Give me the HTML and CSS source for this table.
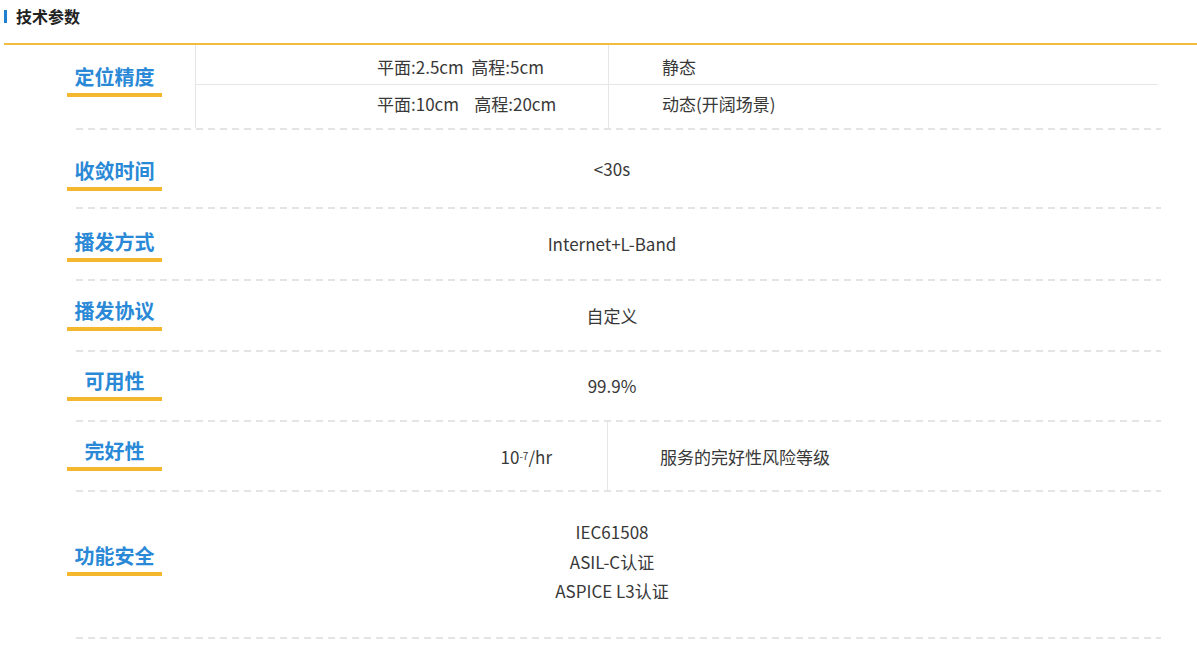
FILE: index.html
```html
<!DOCTYPE html>
<html lang="zh">
<head>
<meta charset="utf-8">
<title>技术参数</title>
<link rel="stylesheet" href="styles.css">
</head>
<body>
<div class="header">
  <h2 class="title">技术参数</h2>
</div>
<div class="spec">
  <div class="row r1">
    <div class="label"><span class="label-text">定位精度</span></div>
    <div class="value split-rows">
      <div class="sub sub-a">平面:2.5cm&nbsp;&nbsp;高程:5cm</div>
      <div class="sub sub-b">静态</div>
      <div class="sub sub-a last">平面:10cm&nbsp;&nbsp;&nbsp;&nbsp;高程:20cm</div>
      <div class="sub sub-b last">动态(开阔场景)</div>
    </div>
  </div>
  <div class="row r2">
    <div class="label"><span class="label-text">收敛时间</span></div>
    <div class="value single">&lt;30s</div>
  </div>
  <div class="row r3">
    <div class="label"><span class="label-text">播发方式</span></div>
    <div class="value single">Internet+L-Band</div>
  </div>
  <div class="row r4">
    <div class="label"><span class="label-text">播发协议</span></div>
    <div class="value single">自定义</div>
  </div>
  <div class="row r5">
    <div class="label"><span class="label-text">可用性</span></div>
    <div class="value single">99.9%</div>
  </div>
  <div class="row r6">
    <div class="label"><span class="label-text">完好性</span></div>
    <div class="value split-cols">
      <div class="col-a">10<sup>-7</sup>/hr</div>
      <div class="col-b">服务的完好性风险等级</div>
    </div>
  </div>
  <div class="row r7">
    <div class="label"><span class="label-text">功能安全</span></div>
    <div class="value single multi">
      <div>IEC61508</div>
      <div>ASIL-C认证</div>
      <div>ASPICE L3认证</div>
    </div>
  </div>
</div>
</body>
</html>
```

FILE: styles.css
```css
* { box-sizing: border-box; }

body {
  margin: 0;
  background: #fff;
  font-family: "Noto Sans CJK SC", "Noto Sans", sans-serif;
  color: #333;
}

.header {
  margin-left: 4px;
  height: 45px;
  padding-top: 6px;
  border-bottom: 2px solid #f2bd3f;
}

.title {
  margin: 0;
  display: flex;
  align-items: center;
  gap: 9px;
  font-size: 16px;
  line-height: 20px;
  font-weight: 700;
  color: #222;
}

.title::before {
  content: "";
  width: 3px;
  height: 13px;
  background: #1f80d2;
}

.spec {
  margin-left: 75px;
  width: 1086px;
}

.row {
  display: grid;
  grid-template-columns: 120px 1fr;
  padding-bottom: 2px;
  background-image: linear-gradient(to right, #e4e4e4 7px, transparent 7px);
  background-size: 12px 2px;
  background-repeat: repeat-x;
  background-position: 1px 100%;
}

.r1 { height: 85px; }
.r2 { height: 79px; }
.r3 { height: 72px; }
.r4 { height: 71px; }
.r5 { height: 70px; }
.r6 { height: 70px; }
.r7 { height: 147px; }

.label {
  display: flex;
  flex-direction: column;
  align-items: flex-start;
}

.r1 .label { padding-top: 19px; }
.r2 .label { padding-top: 28px; }
.r3 .label { padding-top: 20px; }
.r4 .label { padding-top: 17px; }
.r5 .label { padding-top: 16px; }
.r6 .label { padding-top: 16px; }
.r7 .label { padding-top: 51px; }

.label-text {
  margin-left: -8px;
  width: 95px;
  text-align: center;
  font-size: 20px;
  line-height: 26px;
  font-weight: 700;
  color: #2a89d6;
}

.label-text::after {
  content: "";
  display: block;
  margin-top: 3px;
  height: 4px;
  background: #f5b72e;
}

.value {
  font-size: 17px;
  color: #383838;
}

.single {
  display: flex;
  flex-direction: column;
  justify-content: center;
  align-items: center;
  padding-right: 132px;
  padding-bottom: 1px;
}

.multi {
  line-height: 29.5px;
  padding-bottom: 6px;
}

.split-rows {
  display: grid;
  grid-template-columns: 412px 1fr;
  grid-template-rows: 40px 43px;
  border-left: 1px solid #e6e6e6;
  margin-right: 3px;
}

.sub {
  display: flex;
  align-items: center;
  border-bottom: 1px solid #e6e6e6;
  padding-top: 3px;
}

.sub.last {
  border-bottom: none;
  padding-top: 0;
  padding-bottom: 6px;
}

.sub-a { padding-left: 181px; }

.sub-b {
  border-left: 1px solid #e6e6e6;
  padding-left: 53px;
}

.split-cols {
  display: grid;
  grid-template-columns: 412px 1fr;
}

.col-a {
  display: flex;
  align-items: center;
  justify-content: flex-end;
  padding-right: 55px;
}

.col-b {
  display: flex;
  align-items: center;
  border-left: 1px solid #e6e6e6;
  padding-left: 52px;
}

sup {
  font-size: 10px;
  line-height: 0;
  vertical-align: 7px;
}
```
